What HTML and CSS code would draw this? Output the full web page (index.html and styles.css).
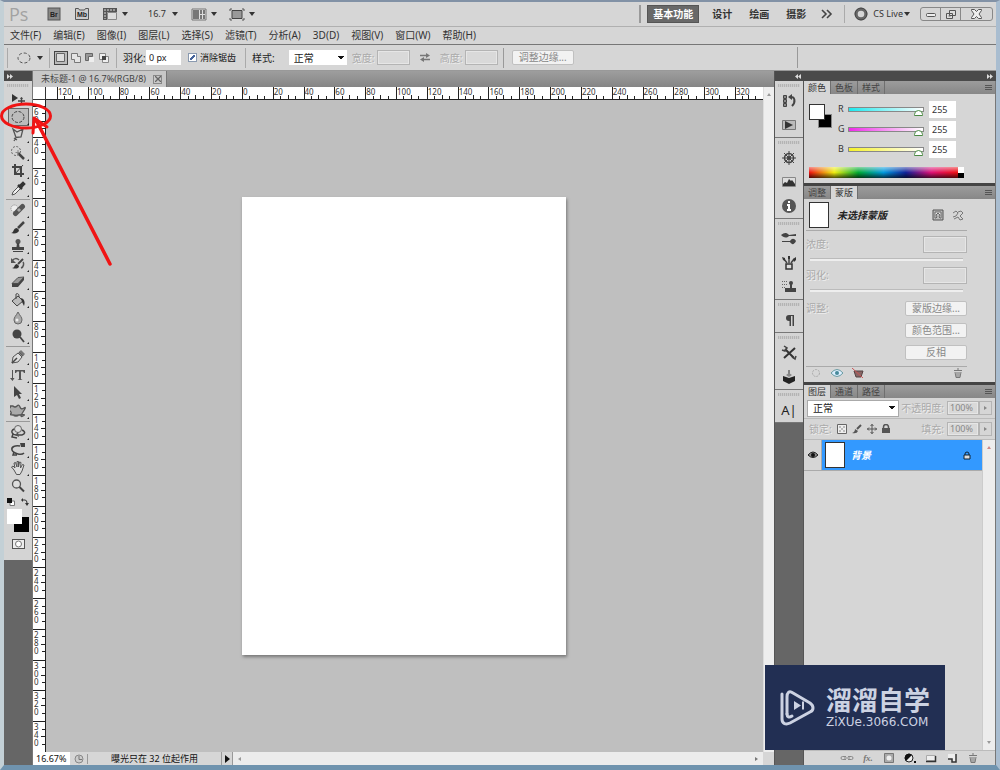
FILE: index.html
```html
<!DOCTYPE html>
<html lang="zh-CN">
<head>
<meta charset="utf-8">
<title>未标题-1 @ 16.7%(RGB/8)</title>
<link rel="stylesheet" href="styles.css">
</head>
<body>
<div class="app">
  <header class="appbar">
    <span class="logo">Ps</span>
    <button class="plain" aria-label="Bridge"><svg width="14" height="14" viewBox="0 0 14 14"><rect x="1" y="1" width="12" height="12" fill="#888" stroke="#555"/><text x="3" y="10" class="badge-text dark">Br</text></svg></button>
    <button class="plain mb" aria-label="Mini Bridge"><svg width="16" height="14" viewBox="0 0 16 14"><path d="M1.500 1.500h3l1 1.500h5l1-1.500h3v11h-13z" fill="#ccc" stroke="#555"/><text x="3" y="10" class="badge-text dark">Mb</text></svg></button>
    <button class="plain film" aria-label="查看额外内容"><svg width="16" height="14" viewBox="0 0 16 14"><path d="M1 1h14v4H5v8H1z" fill="#555"/><path d="M5.500 5.500h9v7h-9z" fill="#ddd" stroke="#888"/><path d="M2 3h12M3 5v7" stroke="#ddd" stroke-dasharray="2 1"/></svg><i class="caret"></i></button>
    <button class="plain zoom-level">16.7<i class="caret"></i></button>
    <button class="plain arrange" aria-label="排列文档"><svg width="16" height="13" viewBox="0 0 16 13"><path d="M1 1h14v11H1z" fill="#ddd" stroke="#777"/><path d="M2 2h6v9H2zM9 2h2v4H9zM12 2h2v4h-2zM9 7h2v4H9zM12 7h2v4h-2z" fill="#777"/></svg><i class="caret"></i></button>
    <button class="plain screen" aria-label="屏幕模式"><svg width="16" height="13" viewBox="0 0 16 13"><path d="M3 2.500h10v8H3z" fill="#999" stroke="#444"/><path d="M1 3V1h2M13 1h2v2M15 10v2h-2M3 12H1v-2" fill="none" stroke="#555"/></svg><i class="caret"></i></button>
    <nav class="workspaces">
      <button class="ws active">基本功能</button><button class="ws">设计</button><button class="ws">绘画</button><button class="ws">摄影</button>
      <button class="plain" aria-label="更多"><svg width="12" height="10" viewBox="0 0 12 10"><path d="M1 1l4 4-4 4M6 1l4 4-4 4" fill="none" stroke="#444" stroke-width="1.600"/></svg></button>
    </nav>
    <button class="plain cslive"><svg width="14" height="14" viewBox="0 0 14 14"><circle cx="7" cy="7" r="4.800" fill="none" stroke="#666" stroke-width="3"/><circle cx="7" cy="7" r="6" fill="none" stroke="#444"/></svg>CS Live<i class="caret"></i></button>
    <div class="winbtns">
      <button aria-label="最小化"><svg width="10" height="10" viewBox="0 0 10 10"><rect x=".5" y="4.500" width="9" height="3" rx="1" fill="#eee" stroke="#555"/></svg></button>
      <button aria-label="还原"><svg width="10" height="10" viewBox="0 0 10 10"><path d="M3.500 1.500h6v5h-6zM.5 4.500h6v5h-6z" fill="#ddd" stroke="#555"/><path d="M2.500 6.500h2v1h-2z" fill="#555"/></svg></button>
      <button class="close" aria-label="关闭"><svg width="11" height="10" viewBox="0 0 11 10"><path d="M.5 .5h3l2 2 2-2h3v1L8 5l2.500 3.500v1h-3l-2-2-2 2h-3v-1L3 5 .5 1.500z" fill="#eee" stroke="#555"/></svg></button>
    </div>
  </header>

  <nav class="menubar">
    <a href="#">文件(F)</a><a href="#">编辑(E)</a><a href="#">图像(I)</a><a href="#">图层(L)</a><a href="#">选择(S)</a><a href="#">滤镜(T)</a><a href="#">分析(A)</a><a href="#">3D(D)</a><a href="#">视图(V)</a><a href="#">窗口(W)</a><a href="#">帮助(H)</a>
  </nav>

  <div class="options">
    <button class="plain preset" aria-label="椭圆选框工具"><svg width="14" height="12" viewBox="0 0 14 12"><ellipse cx="7" cy="6" rx="6" ry="5" fill="none" stroke="#555" stroke-dasharray="3 2"/></svg><i class="caret"></i></button>
    <div class="modes">
      <button class="mode on" aria-label="新选区"><svg width="12" height="12" viewBox="0 0 12 12"><path d="M1.500 1.500h8v8h-8z" fill="#ddd" stroke="#666"/></svg></button>
      <button class="mode" aria-label="添加到选区"><svg width="12" height="12" viewBox="0 0 12 12"><path d="M1.500 1.500h6v3h3v6h-6v-3h-3z" fill="#e4e4e4" stroke="#777"/></svg></button>
      <button class="mode" aria-label="从选区减去"><svg width="12" height="12" viewBox="0 0 12 12"><path d="M1.500 1.500h7v3h-4v4h-3z" fill="#999" stroke="#666"/><path d="M5 5h5v5H5z" fill="#eee"/></svg></button>
      <button class="mode" aria-label="与选区交叉"><svg width="12" height="12" viewBox="0 0 12 12"><path d="M1.500 1.500h6v6h-6zM4.500 4.500h6v6h-6z" fill="#eee" stroke="#888"/><path d="M4 4h4v4H4z" fill="#444"/></svg></button>
    </div>
    <div class="feather"><label for="feather">羽化:</label><input id="feather" class="field" value="0 px"></div>
    <label class="check"><input type="checkbox" checked>消除锯齿</label>
    <div class="style-group"><label for="style">样式:</label><select id="style" class="select"><option>正常</option></select></div>
    <div class="size-group">
      <label for="w">宽度:</label><input id="w" class="field off" disabled>
      <svg class="swap" width="10" height="9" viewBox="0 0 10 9"><path d="M0 2.500h6M4 6.500h6" stroke="#777" stroke-width="1.400"/><path d="M6 0l4 2.500L6 5zM4 4L0 6.500 4 9z" fill="#777"/></svg>
      <label for="h">高度:</label><input id="h" class="field off" disabled>
    </div>
    <button class="push refine" disabled>调整边缘...</button>
    <span class="end-rule"></span>
  </div>

  <main class="work">
    <aside class="tools-col">
      <div class="dock-head"><svg width="6" height="5" viewBox="0 0 6 5"><path d="M0 0l3 2.500L0 5zM3 0l3 2.500L3 5z" fill="#ddd"/></svg></div>
      <div class="tools">
        <i class="grip"></i>
        <button class="tool nomore" aria-label="移动"><svg viewBox="0 0 16 16"><path d="M2 3v8l6-4z" fill="#333"/><path d="M8 10h7M11.500 6.500v7" stroke="#444" stroke-width="1.400"/><path d="M10 8l1.500-2L13 8zM10 12l1.500 2 1.500-2z" fill="#444"/></svg></button>
        <button class="tool on" aria-label="椭圆选框"><svg viewBox="0 0 16 16"><ellipse cx="8" cy="8" rx="6" ry="5.500" fill="none" stroke="#444" stroke-dasharray="3 1.500"/></svg></button>
        <button class="tool" aria-label="套索"><svg viewBox="0 0 16 16"><path d="M3 2l4 3 6-3-2 8-5 .5zM6 10.500L4 14M4 11l3 2" fill="none" stroke="#555" stroke-width="1.300"/></svg></button>
        <button class="tool" aria-label="快速选择"><svg viewBox="0 0 16 16"><circle cx="6" cy="6" r="4.500" fill="none" stroke="#666" stroke-dasharray="2 1.500"/><path d="M8 8l6 6" stroke="#444" stroke-width="2.500"/><path d="M8 5v5M5.500 7.500h5" stroke="#888"/></svg></button>
        <button class="tool" aria-label="裁剪"><svg viewBox="0 0 16 16"><path d="M5 1v10h9M2 4h9v10" fill="none" stroke="#444" stroke-width="2"/><path d="M5 11l8-9" stroke="#444"/></svg></button>
        <button class="tool" aria-label="吸管"><svg viewBox="0 0 16 16"><path d="M2 14l1-3 6-6 2 2-6 6z" fill="#eee" stroke="#555"/><path d="M8 4l4 4M10 5l3-3 1 1-3 3" stroke="#333" stroke-width="2.500"/></svg></button>
        <i class="sep"></i>
        <button class="tool" aria-label="污点修复"><svg viewBox="0 0 16 16"><circle cx="4.500" cy="6.500" r="3.500" fill="#eee" stroke="#888" stroke-dasharray="1 1"/><path d="M5.500 11.500l7-7" stroke="#555" stroke-width="5" stroke-linecap="round"/><path d="M8 7l2 2" stroke="#aaa" stroke-width="3"/></svg></button>
        <button class="tool" aria-label="画笔"><svg viewBox="0 0 16 16"><path d="M8 8l6-6" stroke="#444" stroke-width="2.500"/><path d="M1 13c3 0 2-5 6-5l2 2c0 3-4 4-8 3z" fill="#333"/></svg></button>
        <button class="tool" aria-label="仿制图章"><svg viewBox="0 0 16 16"><circle cx="8" cy="3.500" r="2.500" fill="#555"/><path d="M7 5h2l.5 4H14v3H2V9h4.500zM3 13h10v1H3z" fill="#444"/></svg></button>
        <button class="tool" aria-label="历史记录画笔"><svg viewBox="0 0 16 16"><path d="M8 8l5-5" stroke="#444" stroke-width="2"/><path d="M2 12c3 0 2-4 5-4l2 2c0 3-4 3-7 2z" fill="#333"/><path d="M2 5c2-3 5-3 7-1M11 12c3-1 3-5 2-6" fill="none" stroke="#555" stroke-width="1.500"/><path d="M1 2v5h5z" fill="#555"/></svg></button>
        <button class="tool" aria-label="橡皮擦"><svg viewBox="0 0 16 16"><path d="M2 9.500l6-6 6-.5-6 6.500z" fill="#999" stroke="#555"/><path d="M2 9.500h6V13H2zM8 9.500L14 3v3l-6 7z" fill="#444"/></svg></button>
        <button class="tool" aria-label="油漆桶"><svg viewBox="0 0 16 16"><path d="M2 9l6-5 5 5-6 5z" fill="#bbb" stroke="#444"/><path d="M6 7V2c2-1 3 0 3 3" fill="none" stroke="#444"/><path d="M11 6c4 1 4 5 3 8l-2-4z" fill="#333"/></svg></button>
        <button class="tool" aria-label="模糊"><svg viewBox="0 0 16 16"><path d="M8 2c2 4 4 5 4 8a4 4 0 0 1-8 0c0-3 2-4 4-8z" fill="#aaa" stroke="#666"/><circle cx="7" cy="10" r="1.500" fill="#eee"/></svg></button>
        <button class="tool" aria-label="减淡"><svg viewBox="0 0 16 16"><circle cx="7" cy="6" r="4.500" fill="#444"/><path d="M10 9l4 5" stroke="#444" stroke-width="1.800"/></svg></button>
        <i class="sep"></i>
        <button class="tool" aria-label="钢笔"><svg viewBox="0 0 16 16"><path d="M2 14l1-6 5-4 4 4-4 5z" fill="#ddd" stroke="#555"/><path d="M2 14l5-5M9 3l4 4" stroke="#444" stroke-width="1.500"/><path d="M11 1l4 4-2 2-4-4z" fill="#777"/></svg></button>
        <button class="tool" aria-label="文字"><svg viewBox="0 0 16 16"><path d="M5 3h10v3h-1l-1-1.500h-2V12l1.500 1h-5L9 12V4.500H7L6 6H5zM2 3h1v8h1.500L2.500 14 0 11h2z" fill="#555"/></svg></button>
        <button class="tool" aria-label="路径选择"><svg viewBox="0 0 16 16"><path d="M4 1v11l3-2 2 4 2-1-2-4h3z" fill="#444"/></svg></button>
        <button class="tool" aria-label="自定形状"><svg viewBox="0 0 16 16"><path d="M3 3q2 2 4 0t3 1 4 1-1 4 0 4-4-1-3 1-3-1-4-1 1-3-1-3 1-2z" fill="#aaa" stroke="#555" stroke-width="1.300" stroke-linejoin="round"/></svg></button>
        <i class="sep"></i>
        <button class="tool" aria-label="3D 旋转"><svg viewBox="0 0 16 16"><circle cx="8" cy="5" r="3.500" fill="#ddd" stroke="#666"/><path d="M4 5C0 7 2 11 7 11h5M12 6c4 2 3 4 0 5M3 10l-1 3 5 1" fill="none" stroke="#444" stroke-width="1.500"/><path d="M8 8l-3 3 4 2z" fill="#555"/></svg></button>
        <button class="tool" aria-label="3D 环绕"><svg viewBox="0 0 16 16"><path d="M10 4C5 3 1 5 2 8s9 6 12 3M4 10l-1 3 4 0" fill="none" stroke="#444" stroke-width="1.500"/><path d="M10 1l5 0v4h-4z" fill="#444"/></svg></button>
        <button class="tool" aria-label="抓手"><svg viewBox="0 0 16 16"><path d="M4 10L1.500 7l1.500-1 2 2-1-5 1.500-.5L7 7V1.500h1.500V7l1-5 1.500.5L10.500 8l2-3.500 1.500.5-2 6-2 3.500H6.500z" fill="#ddd" stroke="#555"/></svg></button>
        <button class="tool nomore" aria-label="缩放"><svg viewBox="0 0 16 16"><circle cx="6.500" cy="6" r="4" fill="#ddd" stroke="#555" stroke-width="1.300"/><path d="M9.500 9l4.500 4.500" stroke="#444" stroke-width="2"/></svg></button>
        <div class="mini">
          <svg width="8" height="8" viewBox="0 0 8 8"><path d="M3 3h4.500v4.500H3z" fill="#fff" stroke="#777"/><path d="M0 0h5v5H0z" fill="#111"/></svg>
          <svg width="8" height="8" viewBox="0 0 8 8"><path d="M1 2h3q2 0 2 3v1" fill="none" stroke="#333"/><path d="M0 2l2-2v4zM4 5h4L6 8z" fill="#333"/></svg>
        </div>
        <div class="inks"><button class="ink back" aria-label="背景色"></button><button class="ink fore" aria-label="前景色"></button></div>
        <button class="plain mask" aria-label="快速蒙版"><svg width="13" height="10" viewBox="0 0 13 10"><rect x=".5" y=".5" width="12" height="9" fill="#eee" stroke="#555"/><circle cx="6.500" cy="5" r="3" fill="#fff" stroke="#777"/></svg></button>
      </div>
    </aside>

    <section class="document">
      <div class="tabs"><span class="tab">未标题-1 @ 16.7%(RGB/8)<button class="tab-close" aria-label="关闭文档"><svg width="6" height="6" viewBox="0 0 6 6"><path d="M0 0l6 6M6 0L0 6" stroke="#666" stroke-width="1.300"/></svg></button></span></div>
      <div class="view">
        <i class="corner"></i>
        <div class="hruler"><span>120</span><span>100</span><span>80</span><span>60</span><span>40</span><span>20</span><span>0</span><span>20</span><span>40</span><span>60</span><span>80</span><span>100</span><span>120</span><span>140</span><span>160</span><span>180</span><span>200</span><span>220</span><span>240</span><span>260</span><span>280</span><span>300</span><span>320</span></div>
        <div class="vscroll"><i class="up"></i></div>
        <div class="vruler"><span><b>60</b></span><span><b>40</b></span><span><b>20</b></span><span><b>0</b></span><span><b>20</b></span><span><b>40</b></span><span><b>60</b></span><span><b>80</b></span><span><b>100</b></span><span><b>120</b></span><span><b>140</b></span><span><b>160</b></span><span><b>180</b></span><span><b>200</b></span><span><b>220</b></span><span><b>240</b></span><span><b>260</b></span><span><b>280</b></span><span><b>300</b></span><span><b>320</b></span><span><b>340</b></span></div>
        <div class="canvas"><div class="sheet"></div></div>
      </div>
      <footer class="status">
        <input class="zoom" aria-label="缩放比例" value="16.67%">
        <span class="clock"><svg width="10" height="10" viewBox="0 0 10 10"><circle cx="5" cy="5" r="4" fill="#ccc" stroke="#888"/><path d="M5 2v3.500h3" fill="none" stroke="#777"/></svg></span>
        <span class="message">曝光只在 32 位起作用</span>
        <button class="play" aria-label="状态菜单"><svg width="5" height="8" viewBox="0 0 5 8"><path d="M0 0l5 4-5 4z" fill="#111"/></svg></button>
        <div class="hscroll"><i class="left"></i><i class="right"></i></div>
        <i class="size-grip"></i>
      </footer>
    </section>

    <aside class="side">
      <div class="dock-head side-head"><svg width="6" height="5" viewBox="0 0 6 5"><path d="M3 0L0 2.500 3 5zM6 0L3 2.500 6 5z" fill="#ddd"/></svg><svg width="6" height="5" viewBox="0 0 6 5"><path d="M0 0l3 2.500L0 5zM3 0l3 2.500L3 5z" fill="#ddd"/></svg></div>
      <div class="side-body">
        <div class="iconbar">
          <div class="icons"><i class="grip"></i>
            <button aria-label="历史记录"><svg viewBox="0 0 16 16"><path d="M2.500 2.500h3v3h-3zM2.500 6.500h3v3h-3zM2.500 10.500h3v3h-3z" fill="#888" stroke="#444"/><path d="M9 4c5-1 6 5 2 9" fill="none" stroke="#444" stroke-width="2"/><path d="M7 4l4-3v6z" fill="#444"/></svg></button>
            <button aria-label="动作"><svg viewBox="0 0 16 16"><path d="M1.500 3.500h13v9h-13z" fill="#bbb" stroke="#777"/><path d="M4 4v8l8-4z" fill="#333"/></svg></button></div>
          <div class="icons"><i class="grip"></i>
            <button aria-label="导航器"><svg viewBox="0 0 16 16"><circle cx="8" cy="8" r="4.500" fill="none" stroke="#444" stroke-width="1.500"/><path d="M8 1v14M1 8h14M3 3l10 10M13 3L3 13" stroke="#444"/><circle cx="8" cy="8" r="2" fill="#444"/></svg></button>
            <button aria-label="直方图"><svg viewBox="0 0 16 16"><path d="M1.500 3.500h13v9h-13z" fill="#ddd" stroke="#888"/><path d="M2 12v-2l2-2 2 1 2-4 2 2 1-1 3 4v2z" fill="#333"/></svg></button>
            <button aria-label="信息"><svg viewBox="0 0 16 16"><circle cx="8" cy="8" r="7" fill="#555"/><path d="M8 3v2M6 7h2v5M6 12h4" stroke="#fff" stroke-width="2" fill="none"/></svg></button></div>
          <div class="icons"><i class="grip"></i>
            <button aria-label="画笔"><svg viewBox="0 0 16 16"><path d="M0 4c3-2 5-3 8 0l7-1v2H8c-3 3-6 1-8-1zM1 10h8c2-3 4-3 6 0-2 4-4 4-6 1H1z" fill="#444"/></svg></button>
            <button aria-label="画笔预设"><svg viewBox="0 0 16 16"><path d="M5 9h6v5H5z" fill="#ddd" stroke="#333" stroke-width="1.500"/><path d="M6 8L3 4M8 8V3M10 8l3-4" stroke="#444" stroke-width="1.500"/><path d="M1 2l3 1v3L2 5zM7 1h2v3H7zM12 4l3-2v3l-2 2z" fill="#333"/></svg></button>
            <button aria-label="仿制源"><svg viewBox="0 0 16 16"><path d="M1 2.500h5M1 5.500h5M1 8.500h3" stroke="#666" stroke-dasharray="1 1"/><circle cx="10" cy="4" r="2" fill="#444"/><path d="M9 4h2v5h4v4H4V9h5z" fill="#444"/></svg></button></div>
          <div class="icons"><i class="grip"></i>
            <button aria-label="段落"><svg viewBox="0 0 16 16"><path d="M8 9a3 3 0 0 1 0-6h5v11h-1.500V4H10v10H8.500V9z" fill="#444"/></svg></button></div>
          <div class="icons"><i class="grip"></i>
            <button aria-label="工具预设"><svg viewBox="0 0 16 16"><path d="M4 4l9 9M14 3L3 13" stroke="#333" stroke-width="2"/><path d="M1 5l3 1 2-3-3-2M11 12l3 2 1-3" stroke="#444" fill="none" stroke-width="1.500"/></svg></button>
            <button aria-label="3D"><svg viewBox="0 0 16 16"><path d="M8 1v6" stroke="#333"/><path d="M2 7l6 2 6-2v5l-6 3-6-3z" fill="#222"/><path d="M5 6l3-2 3 2-3 2z" fill="#888"/></svg></button></div>
          <div class="icons"><i class="grip"></i>
            <button class="char" aria-label="字符">A|</button></div>
        </div>

        <div class="panels">
          <section class="panel">
            <div class="ptabs"><button class="ptab sel">颜色</button><button class="ptab">色板</button><button class="ptab">样式</button><i class="pmenu"></i></div>
            <div class="color">
              <div class="chips"><i class="chip black"></i><i class="chip white"></i></div>
              <div class="channels">
                <div class="channel"><label for="r">R</label><input id="r" type="range" class="slider cyan" max="255" value="255"><input class="field num" aria-label="R 值" value="255"></div>
                <div class="channel"><label for="g">G</label><input id="g" type="range" class="slider magenta" max="255" value="255"><input class="field num" aria-label="G 值" value="255"></div>
                <div class="channel"><label for="b">B</label><input id="b" type="range" class="slider yellow" max="255" value="255"><input class="field num" aria-label="B 值" value="255"></div>
              </div>
            </div>
            <div class="ramp"><i class="spectrum"></i><i class="bw"></i></div>
          </section>

          <section class="panel">
            <div class="ptabs"><button class="ptab">调整</button><button class="ptab sel">蒙版</button><i class="pmenu"></i></div>
            <div class="masks">
              <div class="mask-head"><i class="thumb"></i><em>未选择蒙版</em>
                <svg width="12" height="12" viewBox="0 0 12 12"><path d="M1 1h10v10H1z" fill="#bbb" stroke="#555"/><path d="M3 9V3h6v6H8L7 8l1-2-2-2-2 2 1 2-1 1z" fill="#eee" stroke="#666"/></svg>
                <svg width="12" height="12" viewBox="0 0 12 12"><path d="M1 4l3-2 2 2-2 3-3 1M6 3l3-1 2 2-3 3 3 3-3 1-2-3-4 2" fill="none" stroke="#777"/></svg></div>
              <div class="mrow"><label for="density">浓度:</label><input id="density" class="field off" disabled></div>
              <input type="range" class="flat" aria-label="浓度滑块" disabled>
              <div class="mrow"><label for="mfeather">羽化:</label><input id="mfeather" class="field off" disabled></div>
              <input type="range" class="flat" aria-label="羽化滑块" disabled>
              <div class="refines"><span>调整:</span><div class="btns"><button class="push" disabled>蒙版边缘...</button><button class="push" disabled>颜色范围...</button><button class="push" disabled>反相</button></div></div>
              <div class="mask-foot">
                <svg width="12" height="10" viewBox="0 0 12 10"><circle cx="6" cy="5" r="3.500" fill="none" stroke="#aaa" stroke-dasharray="2 1"/></svg>
                <svg width="14" height="10" viewBox="0 0 14 10"><path d="M1 5q6-7 12 0-6 7-12 0z" fill="#def" stroke="#6a9ca3"/><circle cx="7" cy="5" r="2" fill="#47899a"/></svg>
                <svg width="12" height="10" viewBox="0 0 12 10"><path d="M2 3h9L9 9H4z" fill="#866" stroke="#544"/><path d="M0 0l11 10" stroke="#c55"/></svg>
                <svg class="bin" width="10" height="10" viewBox="0 0 10 10"><path d="M1 2.500h8M4 1h2M2 4l1 5.500h4L8 4M4 4v5M6 4v5" fill="none" stroke="#777"/></svg>
              </div>
            </div>
          </section>

          <section class="panel layers">
            <div class="ptabs"><button class="ptab sel">图层</button><button class="ptab">通道</button><button class="ptab">路径</button><i class="pmenu"></i></div>
            <div class="lrow"><select class="select blend" aria-label="混合模式"><option>正常</option></select><label for="opacity">不透明度:</label><input id="opacity" class="field off pct" value="100%" disabled><button class="step" aria-label="调整不透明度"><svg width="3" height="4" viewBox="0 0 3 4"><path d="M0 0l3 2-3 2z" fill="#888"/></svg></button></div>
            <div class="lrow"><span class="locks">锁定:
              <svg width="10" height="10" viewBox="0 0 10 10"><path d="M.5 .5h9v9h-9z" fill="#eee" stroke="#666"/><path d="M2 2h2v2H2zM6 2h2v2H6zM4 4h2v2H4zM2 6h2v2H2zM6 6h2v2H6z" fill="#bbb"/></svg>
              <svg width="10" height="10" viewBox="0 0 10 10"><path d="M5 5l4-4" stroke="#555" stroke-width="2"/><path d="M0 9q3-1 3-4l3 2q-1 3-6 2z" fill="#555"/></svg>
              <svg width="10" height="10" viewBox="0 0 10 10"><path d="M5 0v10M0 5h10M3.500 2L5 .5 6.500 2M3.500 8L5 9.500 6.500 8M2 3.500L.5 5 2 6.500M8 3.500L9.500 5 8 6.500" fill="none" stroke="#555"/></svg>
              <svg width="8" height="10" viewBox="0 0 8 10"><path d="M0 4h8v5H0z" fill="#555"/><path d="M1.500 5V3a2.500 2.500 0 0 1 5 0v2" fill="none" stroke="#555" stroke-width="1.500"/></svg></span>
              <label for="fill">填充:</label><input id="fill" class="field off pct" value="100%" disabled><button class="step" aria-label="调整填充"><svg width="3" height="4" viewBox="0 0 3 4"><path d="M0 0l3 2-3 2z" fill="#888"/></svg></button></div>
            <div class="list">
              <div class="rows">
                <div class="layer">
                  <button class="eye" aria-label="可见性"><svg width="10" height="8" viewBox="0 0 10 8"><path d="M0 4q5-6 10 0-5 5-10 0z" fill="#888" stroke="#222"/><circle cx="5" cy="4" r="2" fill="#111"/></svg></button>
                  <div class="layer-main"><i class="thumb"></i><em>背景</em><svg width="8" height="9" viewBox="0 0 8 9"><path d="M1 4h6v4H1z" fill="#ddd" stroke="#123"/><path d="M2 4V3a2 2 0 0 1 4 0v1" fill="none" stroke="#123"/></svg></div>
                </div>
              </div>
              <div class="lscroll"><i class="up red"></i><i class="down"></i></div>
            </div>
            <div class="lfoot">
              <button aria-label="链接"><svg viewBox="0 0 14 10"><path d="M6 3.500H2.500a1.500 1.500 0 0 0 0 3H6M8 3.500h3.500a1.500 1.500 0 0 1 0 3H8M4 5h6" fill="none" stroke="#888"/></svg></button>
              <button class="fx" aria-label="图层样式">fx.</button>
              <button aria-label="添加蒙版"><svg viewBox="0 0 14 10"><path d="M2.500 .5h9v9h-9z" fill="#aaa" stroke="#777"/><circle cx="7" cy="5" r="2.500" fill="#eee"/></svg></button>
              <button aria-label="调整图层"><svg viewBox="0 0 14 10"><circle cx="6" cy="5" r="4" fill="#eee" stroke="#222"/><path d="M3 8a4 4 0 0 1 6-6z" fill="#111"/><path d="M11 8h2v2h-2z" fill="#111"/></svg></button>
              <button aria-label="新建组"><svg viewBox="0 0 14 10"><path d="M2.500 2.500h9v5h-9z" fill="#eee" stroke="#aaa"/><path d="M2 8.500h9.500V3" fill="none" stroke="#333" stroke-width="1.500"/></svg></button>
              <button aria-label="新建图层"><svg viewBox="0 0 14 10"><path d="M3 1h8v8H8V6H3z" fill="#eee"/><path d="M3 6h4v3h4V1" fill="none" stroke="#333" stroke-width="1.500"/></svg></button>
              <button aria-label="删除图层"><svg viewBox="0 0 14 10"><path d="M3 2.500h8M6 1h2M4 4l1 5.500h4L10 4M6 4v5M8 4v5" fill="none" stroke="#777"/></svg></button>
            </div>
          </section>
        </div>
      </div>
    </aside>
  </main>
</div>

<svg class="pointer" width="120" height="180" viewBox="0 0 120 180"><g fill="none" stroke="#f01414" stroke-linecap="round"><ellipse cx="26" cy="26" rx="24.500" ry="12" stroke-width="3"/><path d="M110 174L36 30" stroke-width="3.500"/><path d="M33 43l1-15 13 9" stroke-width="3" stroke-linejoin="round"/></g></svg>

<div class="watermark">
  <svg width="36" height="38" viewBox="0 0 36 38"><g fill="none" stroke="#ccd2e2" stroke-width="3" stroke-linecap="round" stroke-linejoin="round"><path d="M2 5v25c0 5 4 6 8 4l20-11c4-2 4-6 0-9L13 4C9 1 7 4 7 8v17"/><path d="M7 25c0 3 2 4 5 2"/></g><path d="M14 12v9l7-4.500zM22 12.500h2v8h-2z" fill="#ccd2e2"/></svg>
  <div class="wm-text"><div class="wm-name">溜溜自学</div><div class="wm-url">ZiXUe.3066.COM</div></div>
</div>
</body>
</html>
```
FILE: styles.css
```css
* { box-sizing: border-box; }
body {
  margin: 0;
  font: 10px/14px "Noto Sans", "Noto Sans CJK SC", sans-serif;
  color: #333;
  background: #c4d3de;
}
button, input, select { font: inherit; color: inherit; margin: 0; padding: 0; border: 0; border-radius: 0; background: none; }
svg { display: block; flex: none; }
i { font-style: normal; }
a { color: inherit; text-decoration: none; }

.app {
  display: flex; flex-direction: column; min-height: 100vh;
  border-top: 2px solid #8292a6; border-left: 4px solid #c3d0d6;
  border-right: 4px solid #a9bdd0; border-bottom: 5px solid #6f93ae;
  background: #d6d6d6;
}
.plain { display: flex; align-items: center; gap: 6px; }
.caret { flex: none; border: 3px solid transparent; border-top: 4px solid #333; border-bottom: 0; }

.appbar { display: flex; align-items: center; height: 25px; padding: 0 3px 0 5px; border-bottom: 1px solid #b0b0b0; }
.logo { width: 38px; font: 18px/22px "Open Sans", sans-serif; color: #a2a2a2; }
.badge-text { font: bold 7px "Liberation Sans", sans-serif; }
.badge-text.dark { fill: #222; }
.mb { margin-left: 13px; }
.film { margin-left: 12px; gap: 4px; }
.zoom-level { margin-left: 20px; font-size: 9px; }
.arrange { margin-left: 13px; gap: 4px; }
.screen { margin-left: 12px; gap: 4px; }
.workspaces { display: flex; align-items: center; height: 18px; gap: 17px; margin-left: auto; padding-left: 6px; border-left: 2px solid #9a9a9a; }
.ws { font: bold 10px/18px "Noto Sans CJK SC", sans-serif; color: #333; }
.ws.active { height: 18px; padding: 0 5px; margin-right: -4px; color: #fff; background: #686868; border: 1px solid #555; line-height: 16px; }
.workspaces .plain { margin-left: -2px; }
.cslive { gap: 5px; height: 18px; margin: 0 10px 0 11px; padding-left: 9px; border-left: 1px solid #aaa; font-size: 9px; }
.cslive .caret { margin-left: -4px; }
.winbtns { display: flex; border: 1px solid #888; border-radius: 3px; height: 14px; }
.winbtns button { display: flex; align-items: center; justify-content: center; width: 20px; border-right: 1px solid #888; }
.winbtns .close { width: 31px; border: 0; }

.menubar { display: flex; gap: 12px; padding: 1px 6px 2px; }

.options { display: flex; align-items: center; height: 27px; padding-left: 3px; border-top: 1px solid #777; border-bottom: 1px solid #999; }
.preset { height: 20px; padding: 0 6px 0 9px; border-left: 1px solid #aaa; border-right: 1px solid #aaa; }
.modes { display: flex; padding: 0 5px 0 4px; }
.mode { padding: 1px; height: 14px; }
.mode.on { padding: 0; border: 1px solid #444; background: #bbb; margin-right: 1px; }
.field { height: 15px; padding: 0 3px; background: #fff; }
.field.off { background: #d9d9d9; border: 1px solid #b4b4b4; outline: 1px solid #e6e6e6; outline-offset: -2px; color: #888; }
.feather { display: flex; align-items: center; height: 20px; padding-left: 6px; border-left: 1px solid #aaa; color: #222; }
.feather .field { width: 35px; font-size: 9px; }
.feather label { width: 23px; }
.check { display: flex; align-items: center; height: 20px; gap: 3px; padding: 0 9px 0 7px; border-right: 1px solid #aaa; font-size: 9px; color: #111; }
.check input { appearance: none; width: 9px; height: 9px; border: 1px solid #8a9ab0; background: #fff linear-gradient(135deg, transparent 35%, #46649b 35% 65%, transparent 65%) 1px 1px / 5px 5px no-repeat; }
.style-group { display: flex; align-items: center; gap: 14px; padding-left: 6px; color: #222; }
.select {
  appearance: none; width: 58px; height: 15px; padding: 0 5px; color: #222;
  background-color: #fff;
  background-image: linear-gradient(to top right, transparent 50%, #111 50%), linear-gradient(to top left, transparent 50%, #111 50%);
  background-position: right 6px center, right 3px center;
  background-size: 3px 4px;
  background-repeat: no-repeat;
}
.size-group { display: flex; align-items: center; height: 20px; gap: 2px; padding: 0 5px; border-right: 1px solid #999; color: #aaa; text-shadow: 1px 1px #eee; }
.size-group .field { width: 33px; }
.size-group label { width: 23px; }
.swap { margin: 0 8px; }
.push { height: 15px; width: 62px; line-height: 13px; background: #f2f2f2; border: 1px solid #c0c0c0; border-radius: 2px; color: #888; white-space: nowrap; }
.refine { margin-left: 8px; }
.end-rule { height: 21px; margin-left: auto; margin-right: 198px; border-left: 1px solid #999; }

.work { display: flex; flex: 1; }
.dock-head { height: 10px; padding: 3px; background: #4a4a4a; }
.side-head { display: flex; padding: 3px 3px 3px 20px; justify-content: space-between; }
.tools-col { width: 29px; background: #666; border-right: 1px solid #777; }
.tools { display: flex; flex-direction: column; align-items: center; height: 479px; background: #d4d4d4; }
.grip { display: block; align-self: stretch; height: 3px; margin: 3px 3px 2px; background: repeating-linear-gradient(90deg, #b4b4b4 0 1px, #ccc 1px 2px); }
.tools .grip { margin-bottom: 3px; }
.tool { position: relative; width: 21px; height: 18px; padding: 1px 2px; }
.tool svg { width: 16px; height: 16px; }
.tool::after { content: ""; position: absolute; right: 0; bottom: 1px; border: 1px solid #222; border-left-color: transparent; border-top-color: transparent; }
.tool.nomore::after { display: none; }
.tool.on { background: #bcbcbc; box-shadow: inset 0 0 0 1px #666; }
.sep { align-self: stretch; height: 1px; margin: 1px 2px; background: #999; }
.mini { display: flex; justify-content: space-between; width: 22px; padding: 3px 0; }
.inks { position: relative; width: 22px; height: 23px; }
.ink { position: absolute; width: 15px; height: 15px; }
.ink.fore { left: 0; top: 0; background: #fff; }
.ink.back { right: 0; bottom: 0; background: #000; }
.mask { margin-top: 7px; }

.document { display: flex; flex-direction: column; flex: 1; min-width: 0; }
.tabs { height: 16px; background: linear-gradient(#9e9e9e, #858585); }
.tab { display: inline-flex; align-items: center; gap: 7px; height: 16px; padding: 0 4px 0 8px; background: #c8c8c8; color: #444; font-size: 9px; border-right: 1px solid #777; }
.tab-close { display: flex; align-items: center; justify-content: center; width: 9px; height: 9px; border: 1px solid #888; }
.view { display: grid; flex: 1; grid-template: 13px 1fr / 13px 1fr 11px; }
.corner { background: #fff; border-right: 1px solid #333; border-bottom: 1px solid #333; }
.hruler { display: grid; grid-template-columns: repeat(22, minmax(0, 11fr)) minmax(0, 10fr); padding-left: 11px; background: #fff; border-bottom: 1px solid #222; font-size: 8px; line-height: 9px; }
.hruler span, .vruler span { padding-left: 1px; background-repeat: no-repeat; background-image: linear-gradient(#222, #222), linear-gradient(#222, #222), linear-gradient(#222, #222), linear-gradient(#222, #222); }
.hruler span { background-size: 1px 100%, 1px 3px, 1px 4px, 1px 3px; background-position: 0 0, 25% 100%, 50% 100%, 75% 100%; }
.vscroll { grid-row: span 2; background: #eee; border-left: 1px solid #ddd; }
.up, .down { display: block; width: 4px; margin: 6px auto; border: 2px solid transparent; }
.up { border-bottom: 3px solid #999; border-top: 0; }
.down { border-top: 3px solid #999; border-bottom: 0; }
.vruler { display: grid; grid-template-rows: repeat(21, minmax(0, 1fr)); padding-top: 6px; background: #fff; border-right: 1px solid #222; font-size: 8px; line-height: 8px; }
.vruler b { display: block; width: 5px; font-weight: normal; overflow-wrap: anywhere; }
.vruler span { padding: 2px 0 0 1px; background-size: 100% 1px, 3px 1px, 4px 1px, 3px 1px; background-position: 0 0, 100% 25%, 100% 50%, 100% 75%; }
.canvas { display: flex; align-items: center; justify-content: center; padding-right: 2px; background: #bfbfbf; }
.sheet { width: 324px; height: 458px; background: #fff; box-shadow: 1px 2px 3px #777; }
.status { display: flex; align-items: center; height: 13px; background: #d6d6d6; line-height: 13px; color: #111; }
.zoom { width: 37px; height: 13px; padding: 0 0 0 3px; background: #fff; font-size: 9px; }
.clock { padding: 0 3px 0 4px; border-right: 1px solid #999; }
.message { width: 133px; text-align: center; font-size: 9px; }
.play { display: flex; justify-content: center; align-items: center; width: 12px; height: 13px; border-left: 1px solid #999; border-right: 1px solid #999; }
.hscroll { display: flex; flex: 1; align-items: center; justify-content: space-between; height: 13px; padding: 0 5px; background: #ececec; }
.left, .right { border: 2px solid transparent; }
.left { border-right: 3px solid #999; border-left: 0; }
.right { border-left: 3px solid #777; border-right: 0; }
.size-grip { width: 11px; height: 13px; background: #d6d6d6; }

.side { display: flex; flex-direction: column; width: 222px; border-left: 1px solid #555; background: #666; }
.side-body { display: flex; flex: 1; }
.iconbar { width: 28px; }
.icons { background: #d4d4d4; border-bottom: 1px solid #777; overflow: hidden; }
.icons .grip { margin: 3px 3px 2px; }
.icons button { display: flex; align-items: center; justify-content: center; width: 28px; height: 24px; }
.icons svg { width: 16px; height: 16px; }
.icons .char { font: 13px/24px "Noto Sans", sans-serif; color: #222; }
.panels { display: flex; flex-direction: column; flex: 1; border-left: 1px solid #555; border-right: 1px solid #777; background: #d6d6d6; }
.panel { border-bottom: 3px solid #444; }
.ptabs { display: flex; height: 13px; background: linear-gradient(#9c9c9c, #878787); }
.ptab { width: 27px; font-size: 9px; line-height: 12px; color: #444; border-right: 1px solid #6f6f6f; }
.ptab.sel { background: #d6d6d6; color: #333; }
.pmenu { width: 7px; height: 5px; margin: 4px 3px 0 auto; background: repeating-linear-gradient(#555 0 1px, transparent 1px 2px); }

.color { display: flex; padding: 5px 5px 0; gap: 6px; }
.chips { position: relative; width: 23px; height: 29px; }
.chip { position: absolute; width: 16px; height: 16px; border: 1px solid #333; }
.chip.white { left: 0; top: 5px; background: #fff; }
.chip.black { right: 0; bottom: 0; width: 14px; height: 14px; background: #000; border-color: #888; }
.channel { display: flex; align-items: center; height: 20px; font-size: 9px; }
.channel label { width: 10px; }
.slider { appearance: none; width: 76px; height: 5px; border: 1px solid #888; }
.cyan { background: linear-gradient(90deg, #1de8ee, #fff); }
.magenta { background: linear-gradient(90deg, #ee2be8, #fff); }
.yellow { background: linear-gradient(90deg, #f5f22a, #fff); }
.slider::-webkit-slider-thumb { appearance: none; width: 9px; height: 6px; margin: 8px -4px 0 0; border: 1px solid #4c8a45; border-radius: 5px 5px 0 0; background: #fff; }
.num { width: 27px; height: 17px; margin-left: 5px; padding: 0 3px; }
.ramp { display: flex; height: 11px; margin: 8px 31px 5px 5px; }
.spectrum { flex: 1; background: linear-gradient(#fff8, transparent 50%, #000a), linear-gradient(90deg, #e11, #ee1 17%, #0a3 33%, #09d 50%, #129 65%, #d17 82%, #e11); }
.bw { width: 6px; background: linear-gradient(#fff 50%, #000 50%); }

.masks { padding: 3px 28px 0 2px; }
.mask-head { display: flex; align-items: center; gap: 8px; height: 29px; padding: 0 3px 3px 3px; border-bottom: 1px solid #aaa; }
.mask-head em { flex: 1; font-weight: bold; color: #222; }
.thumb { width: 20px; height: 26px; background: #fff; border: 1px solid #333; }
.mrow { display: flex; justify-content: space-between; align-items: center; height: 25px; padding-top: 1px; color: #aaa; text-shadow: 1px 1px #eee; }
.mrow .field { width: 44px; height: 17px; }
.flat { appearance: none; display: block; width: calc(100% - 8px); height: 3px; margin: 2px 4px 1px; background: #eee; border-top: 1px solid #bbb; }
.flat::-webkit-slider-thumb { appearance: none; width: 0; height: 0; }
.refines { display: flex; justify-content: space-between; padding: 8px 0 6px; color: #aaa; text-shadow: 1px 1px #eee; }
.btns { display: flex; flex-direction: column; gap: 7px; }
.mask-foot { display: flex; gap: 8px; padding: 1px 4px 4px; border-top: 1px solid #aaa; }
.bin { margin-left: auto; }

.layers { display: flex; flex-direction: column; flex: 1; border-bottom: 0; }
.lrow { display: flex; align-items: center; height: 21px; padding: 0 3px; color: #aaa; text-shadow: 1px 1px #eee; border-bottom: 1px solid #bbb; }
.blend { flex: 1; height: 17px; border: 1px solid #aaa; text-shadow: none; }
.lrow label { margin: 0 3px 0 2px; }
.pct { width: 32px; height: 14px; padding: 0 2px; font-size: 9px; }
.step { display: flex; align-items: center; justify-content: center; width: 13px; height: 14px; border: 1px solid #b4b4b4; }
.locks { display: flex; flex: 1; align-items: center; gap: 5px; padding-left: 2px; }
.list { display: flex; flex: 1; }
.rows { flex: 1; }
.layer { display: flex; height: 31px; border-bottom: 1px solid #aaa; }
.eye { display: flex; align-items: center; justify-content: center; width: 18px; border-right: 1px solid #aaa; }
.layer-main { display: flex; flex: 1; align-items: center; gap: 6px; padding: 0 11px 0 3px; background: #3399ff; color: #fff; }
.layer-main em { flex: 1; font-weight: bold; }
.lscroll { display: flex; flex-direction: column; justify-content: space-between; width: 13px; background: #ededed; border-left: 1px solid #ccc; }
.up.red { border-bottom-color: #c88; }
.lfoot { display: flex; justify-content: flex-end; align-items: center; gap: 7px; height: 15px; padding-right: 15px; border-top: 1px solid #bbb; }
.lfoot svg { width: 14px; height: 10px; }
.fx { width: 14px; font: italic bold 9px/12px "Liberation Serif", serif; color: #777; }

.pointer { position: absolute; left: 0; top: 90px; pointer-events: none; }
.watermark { position: fixed; right: 55px; bottom: 20px; display: flex; align-items: center; gap: 10px; width: 180px; height: 85px; padding-left: 15px; background: #222f53; color: #ccd2e2; }
.wm-text { padding-bottom: 5px; }
.wm-name { font: bold 26px/34px "Noto Sans CJK SC", sans-serif; }
.wm-url { font: 12px/12px "DejaVu Sans", sans-serif; }
```
